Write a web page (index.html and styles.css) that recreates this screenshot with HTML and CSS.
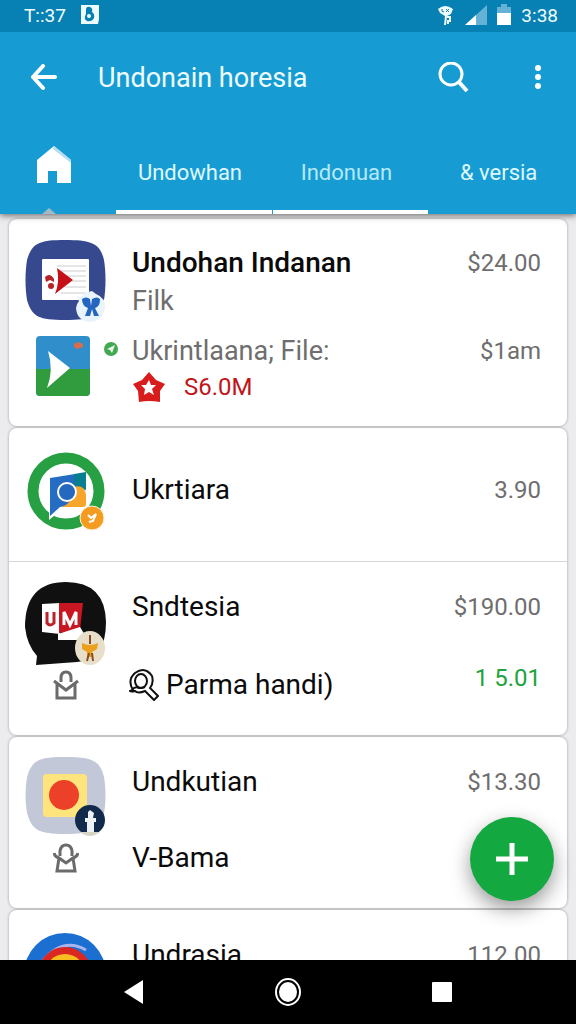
FILE: index.html
```html
<!DOCTYPE html>
<html lang="id">
<head>
    <meta charset="UTF-8">
    <meta name="viewport" content="width=device-width, initial-scale=1.0">
    <title>Undonain horesia</title>
    <link rel="stylesheet" href="styles.css">
</head>
<body>
    <header class="app-header">
        <div class="status-bar">
            <span>T::37</span>
            <svg width="20" height="22" viewBox="0 0 20 22">
                <path d="M1 1h18v14l-1 5H1z" fill="#effcff"/>
                <path d="M6 10V6q0-4 4-3 3 1 2 5 3 2 2 6-2 4-7 3-4-2-1-7z" fill="#0780b3"/>
                <circle cx="9" cy="12" r="2" fill="#effcff"/>
            </svg>
            <div class="status-right">
                <svg width="18" height="22" viewBox="0 0 18 22">
                    <path d="M1 5q7-6 15 0l-2 5-4 2-1 9H7l1-9-5-3z" fill="#effcff"/>
                    <path d="M5 5q-1 3 2 3m2-3l3 3m0-3L9 8" fill="none" stroke="#0780b3"/>
                    <path d="M10 13h3v4h-2v3" fill="none" stroke="#effcff" stroke-width="2"/>
                </svg>
                <svg width="22" height="22" viewBox="0 0 22 22">
                    <path d="M22 1v20H0z" fill="#66b2d6"/>
                    <path d="M11 11v10H0z" fill="#fff"/>
                </svg>
                <svg width="14" height="22" viewBox="0 0 14 22">
                    <path d="M0 3h4V0h6v3h4v6H0z" fill="#66b2d6"/>
                    <path d="M0 9h14v12H0z" fill="#fff"/>
                </svg>
                <span>3:38</span>
            </div>
        </div>
        <div class="toolbar">
            <button class="icon-btn" aria-label="Back">
                <svg width="28" height="28" viewBox="0 0 28 28" fill="none" stroke="#fff" stroke-width="4" stroke-linecap="round" stroke-linejoin="round">
                    <path d="M13 2L3 13l10 11M3 13h22"/>
                </svg>
            </button>
            <h1 class="title">Undonain horesia</h1>
            <button class="icon-btn" aria-label="Search">
                <svg width="32" height="32" viewBox="0 0 32 32" fill="none" stroke="#fff" stroke-width="3">
                    <circle cx="13" cy="12" r="11"/>
                    <path d="M20 19l9 10" stroke-width="4"/>
                </svg>
            </button>
            <button class="icon-btn menu-btn" aria-label="More options">
                <svg width="8" height="28" viewBox="0 0 8 28" fill="#fff">
                    <circle cx="4" cy="4" r="3"/>
                    <circle cx="4" cy="13" r="3"/>
                    <circle cx="4" cy="22" r="3"/>
                </svg>
            </button>
        </div>
        <nav class="tabs">
            <a href="#" class="tab tab-home" aria-label="Home">
                <svg width="34" height="38" viewBox="0 0 34 38">
                    <path d="M0 14L17 0l17 14v23H20V25h-9v12H0z" fill="#fff"/>
                    <path d="M17 0l17 14v3L16 3z" fill="#b5dcf2"/>
                </svg>
            </a>
            <a href="#" class="tab active">Undowhan</a>
            <a href="#" class="tab active faded">Indonuan</a>
            <a href="#" class="tab">&amp; versia</a>
        </nav>
    </header>

    <main class="content">
        <section class="card">
            <div class="row first-row">
                <svg class="app-icon" width="82" height="82" viewBox="0 0 82 82">
                    <path d="M40 0C66 0 75 3 79 20c2 12 2 28 0 40-4 17-13 20-39 20S7 77 2 60C0 48 0 32 2 20 7 3 14 0 40 0z" fill="#36498f"/>
                    <rect x="17" y="19" width="47" height="41" rx="1" fill="#fff"/>
                    <path d="M32 26h29M36 31h25M42 36h19M46 41h15M40 47h21M36 53h25" stroke="#ccc"/>
                    <path d="M32 28l16 12-18 14q5-12 2-26z" fill="#c5101a"/>
                    <path d="M20 37q5-5 9 2v3l-4-2-4 2z" fill="#b92028"/>
                    <circle cx="26" cy="46" r="3" fill="#b92028"/>
                    <path d="M52 56l4 1 4-4 7-2 4 3q10 4 9 14-3 14-15 14-13-1-14-14 1-5 3-7z" fill="#e9f3fc"/>
                    <path d="M57 59q4-3 8 0l1 7 1-7q5-3 8 0 0 8-5 9l4 8h-5l-2-7-2 7h-5l3-8q-6-2-6-9z" fill="#2465be"/>
                </svg>
                <div class="info">
                    <h2 class="name bold">Undohan Indanan</h2>
                    <p class="sub">Filk</p>
                </div>
                <span class="price">$24.00</span>
            </div>
            <div class="row file-row">
                <div class="file-icons">
                    <svg width="54" height="60" viewBox="0 0 54 60">
                        <rect width="54" height="60" rx="4" fill="#308fca"/>
                        <path d="M0 33h54v23q0 4-4 4H4q-4 0-4-4z" fill="#319c3e"/>
                        <path d="M12 15l22 17-23 20q7-18 1-37z" fill="#fff"/>
                        <path d="M38 8l4-2 5 2v3l-6 2-3-2z" fill="#d96c4b"/>
                    </svg>
                    <svg width="14" height="14" viewBox="0 0 14 14">
                        <circle cx="7" cy="7" r="7" fill="#43a852"/>
                        <path d="M11 3L8 11 6 8 3 7z" fill="#eaf6eb"/>
                    </svg>
                </div>
                <div class="info">
                    <p class="sub">Ukrintlaana; File:</p>
                    <p class="rating">
                        <svg width="34" height="32" viewBox="0 0 34 32">
                            <path d="M17 1l7 8 9 4-5 7v11q-11-2-21 0l-1-11-5-7 9-4z" fill="#d81c1c"/>
                            <path d="M17 9l2 5h5l-4 4 2 6-5-3-5 3 1-6-4-4h5z" fill="#fff"/>
                        </svg>
                        <span>S6.0M</span>
                    </p>
                </div>
                <span class="price">$1am</span>
            </div>
        </section>

        <section class="card">
            <div class="item short">
                <div class="row">
                    <svg class="app-icon" width="82" height="82" viewBox="0 0 82 82">
                        <circle cx="41" cy="40" r="33" fill="#fff" stroke="#27a043" stroke-width="11"/>
                        <path d="M24 63l2-10 10 6-12 10z" fill="#fff"/>
                        <path d="M25 27l25-4v31l-15 2-10 9z" fill="#246dc2"/>
                        <path d="M49 23l12-2v18l-12-3z" fill="#087f91"/>
                        <path d="M48 36q12-3 13 8v9q0 3-3 3H36q12-3 12-20z" fill="#f7a62b"/>
                        <circle cx="42" cy="41" r="9" fill="#2468bf" stroke="#fff" stroke-width="2"/>
                        <circle cx="67" cy="67" r="12" fill="#f49c20" stroke="#fff3dd"/>
                        <path d="M63 64l3 3 5-4-3 7-4 1" fill="none" stroke="#fff" stroke-width="2"/>
                    </svg>
                    <h2 class="name">Ukrtiara</h2>
                    <span class="price">3.90</span>
                </div>
            </div>
            <div class="item">
                <div class="row">
                    <svg class="app-icon" width="82" height="84" viewBox="0 0 82 84">
                        <path d="M41 0q39 0 40 40 0 38-29 40l-41 3 1-9Q2 63 0 45 0 0 41 0z" fill="#101010"/>
                        <path d="M17 22l18-1v31l-18-2z" fill="#fff"/>
                        <path d="M34 21h24l-3 27-21 3z" fill="#c81722"/>
                        <path d="M33 52l22-7 8 13H33z" fill="#fff"/>
                        <path d="M22 30v11q3 4 7 0V30" fill="none" stroke="#b9232a" stroke-width="3"/>
                        <path d="M39 43V30l6 13 6-13v13" fill="none" stroke="#fff" stroke-width="3"/>
                        <ellipse cx="65" cy="66" rx="15" ry="17" fill="#e8dfca"/>
                        <path d="M57 61q8 4 16 0l-1 6-5 3v5h-5v-5l-5-3z" fill="#eba11d"/>
                        <path d="M65 53v9M64 71l-2 8m5-8l1 8" stroke="#8a4c22" stroke-width="2"/>
                    </svg>
                    <h2 class="name">Sndtesia</h2>
                    <span class="price">$190.00</span>
                </div>
                <div class="row detail">
                    <svg class="bag" width="26" height="30" viewBox="0 0 26 30" fill="none" stroke="#6b6b6b" stroke-width="3">
                        <path d="M8 12V8q0-6 5-6t5 6v4"/>
                        <path d="M1 11l12 9 12-9M4 14v14h18V14"/>
                    </svg>
                    <p class="name search-name">
                        <svg width="30" height="32" viewBox="0 0 30 32" fill="none" stroke="#111" stroke-width="2">
                            <path d="M4 21q-6-10 2-17 10-7 17 3 2 7-2 12l8 8-4 4-9-9q-7 3-10 0-4 1-5 0z"/>
                            <ellipse cx="12" cy="12" rx="6" ry="7"/>
                            <path d="M3 21q3-4 7-2 4 0 6-1"/>
                        </svg>
                        <span>Parma handi)</span>
                    </p>
                    <span class="price green">1 5.01</span>
                </div>
            </div>
        </section>

        <section class="card">
            <div class="item">
                <div class="row">
                    <svg class="app-icon" width="82" height="82" viewBox="0 0 82 82">
                        <path d="M40 0C66 0 75 3 79 20c2 12 2 26 0 36-4 17-12 21-39 21S7 73 2 56C0 44 0 32 2 20 7 3 14 0 40 0z" fill="#c3c8d8"/>
                        <rect x="18" y="17" width="44" height="43" rx="4" fill="#fde47d"/>
                        <circle cx="39" cy="38" r="15" fill="#ec4128"/>
                        <circle cx="65" cy="63" r="15" fill="#11294b"/>
                        <path d="M55 75h20q-10 8-20 0z" fill="#d8d4c5"/>
                        <path d="M63 55l2-2 4 3-1 5h3v4h-2v10h-7V65h-2v-4h3z" fill="#eef2f7"/>
                    </svg>
                    <h2 class="name">Undkutian</h2>
                    <span class="price">$13.30</span>
                </div>
                <div class="row detail">
                    <svg class="bag" width="26" height="30" viewBox="0 0 26 30" fill="none" stroke="#6b6b6b" stroke-width="3">
                        <path d="M7 13V8q1-6 6-6t6 6v5"/>
                        <path d="M1 10q1 4 5 5l7 5 7-5q4-1 5-5M6 15L4 28h18l-2-13"/>
                    </svg>
                    <p class="name">V-Bama</p>
                </div>
            </div>
        </section>

        <section class="card">
            <div class="item">
                <div class="row">
                    <svg class="app-icon" width="82" height="82" viewBox="0 0 82 82">
                        <circle cx="40" cy="44" r="41" fill="#1b6fd0"/>
                        <path d="M16 33Q37 6 61 20" fill="none" stroke="#a9b4ee" stroke-width="3"/>
                        <circle cx="40" cy="44" r="27" fill="#da2721"/>
                        <circle cx="40" cy="44" r="20" fill="#f9bd22"/>
                        <circle cx="40" cy="44" r="12" fill="#f6f5d2"/>
                        <circle cx="40" cy="44" r="8" fill="#3c9b47"/>
                    </svg>
                    <h2 class="name">Undrasia</h2>
                    <span class="price">112.00</span>
                </div>
            </div>
        </section>

        <button class="fab" aria-label="Add">
            <svg width="32" height="32" viewBox="0 0 32 32" stroke="#fff" stroke-width="5">
                <path d="M16 0v32M0 16h32"/>
            </svg>
        </button>
    </main>

    <footer class="nav-bar">
        <button class="icon-btn" aria-label="Back">
            <svg width="20" height="26" viewBox="0 0 20 26"><path d="M19 1v24L0 13z" fill="#fff"/></svg>
        </button>
        <button class="icon-btn" aria-label="Home">
            <svg width="28" height="30" viewBox="0 0 28 30">
                <ellipse cx="14" cy="15" rx="12" ry="13" fill="none" stroke="#fff" stroke-width="2"/>
                <ellipse cx="14" cy="15" rx="9" ry="10" fill="#fff"/>
            </svg>
        </button>
        <button class="icon-btn" aria-label="Recent apps">
            <svg width="22" height="22" viewBox="0 0 22 22"><rect x="1" y="1" width="20" height="20" rx="1" fill="#fff"/></svg>
        </button>
    </footer>
</body>
</html>
```
FILE: styles.css
```css
* {
    box-sizing: border-box;
}

body {
    margin: 0;
    height: 100vh;
    display: flex;
    flex-direction: column;
    overflow: hidden;
    background: #ececee;
    font-family: Roboto, "Liberation Sans", sans-serif;
    color: #0a0a0a;
}

h1, h2, p {
    margin: 0;
    font-weight: 400;
}

svg {
    display: block;
    flex-shrink: 0;
}

.icon-btn {
    padding: 0;
    border: none;
    background: none;
    cursor: pointer;
}

/* header */
.app-header {
    background: #169cd3;
    color: #effcff;
    box-shadow: 0 2px 6px rgba(0, 0, 0, 0.5);
    z-index: 1;
}

.status-bar {
    display: flex;
    align-items: center;
    gap: 14px;
    height: 32px;
    padding: 0 18px 2px 24px;
    background: #0780b3;
    font-size: 19px;
}

.status-right {
    display: flex;
    align-items: center;
    gap: 10px;
    margin-left: auto;
}

.toolbar {
    display: flex;
    align-items: center;
    height: 92px;
    padding: 0 34px 0 30px;
}

.title {
    flex: 1;
    margin-left: 40px;
    font-size: 27px;
}

.menu-btn {
    margin-left: 64px;
}

.tabs {
    display: grid;
    grid-template-columns: 20% 27% 27% 1fr;
    column-gap: 1px;
    height: 90px;
}

.tab {
    display: flex;
    align-items: center;
    justify-content: center;
    padding: 10px 8px 0 0;
    border-bottom: 4px solid transparent;
    color: #dff8ff;
    font-size: 22px;
    text-decoration: none;
}

.tab.active {
    border-bottom-color: #fff;
}

.tab.faded {
    color: #b5e9fa;
}

.tab-home {
    position: relative;
    padding: 0 8px 4px 0;
}

.tab-home::after {
    content: "";
    position: absolute;
    left: 42px;
    bottom: -4px;
    border: 7px solid transparent;
    border-top: none;
    border-bottom: 6px solid #9fb9c7;
}

/* cards */
.content {
    position: relative;
    flex: 1;
    min-height: 0;
    overflow: hidden;
    display: flex;
    flex-direction: column;
    gap: 2px;
    padding: 5px 9px 0;
}

.card {
    flex-shrink: 0;
    background: #fff;
    border-radius: 8px;
    box-shadow: 0 0 3px rgba(0, 0, 0, 0.35);
}

.row {
    display: grid;
    grid-template-columns: 82px 1fr auto;
    column-gap: 25px;
    padding: 0 26px 0 16px;
}

.first-row {
    padding-top: 21px;
}

.first-row .info {
    padding-top: 4px;
}

.name,
.sub,
.price {
    font-size: 28px;
    line-height: 38px;
}

.name,
.price {
    margin-top: 6px;
}

.first-row .price {
    margin-top: 4px;
}

.info .name {
    margin-top: 0;
}

.bold {
    font-weight: 500;
}

.sub {
    color: #6e6e6e;
    font-size: 27px;
}

.price {
    color: #6e6e6e;
    font-size: 24px;
}

.file-row {
    padding-top: 10px;
    padding-bottom: 22px;
}

.file-row .price {
    margin-top: 0;
}

.file-icons {
    display: flex;
    gap: 14px;
    padding: 4px 0 0 11px;
}

.file-icons svg + svg {
    margin-top: 6px;
}

.rating {
    display: flex;
    align-items: center;
    gap: 18px;
    color: #c0161b;
    font-size: 24px;
    line-height: 34px;
}

.item {
    padding: 20px 0 31px;
}

.item + .item {
    border-top: 1px solid #d6d6d6;
}

.item.short {
    padding: 23px 0 28px;
}

.short .name,
.short .price {
    margin-top: 20px;
}

.detail {
    align-items: center;
}

.detail .name {
    margin-top: 0;
}

.bag {
    justify-self: center;
}

.search-name {
    display: flex;
    align-items: center;
    gap: 7px;
    margin-left: -3px;
}

.price.green {
    align-self: start;
    margin-top: 0;
    color: #20a340;
    line-height: 24px;
}

.fab {
    position: absolute;
    right: 22px;
    bottom: 59px;
    display: flex;
    align-items: center;
    justify-content: center;
    width: 84px;
    height: 84px;
    padding: 0;
    border: none;
    border-radius: 50%;
    background: #14a940;
    box-shadow: 0 8px 20px rgba(0, 0, 0, 0.4);
    cursor: pointer;
}

/* system navigation */
.nav-bar {
    display: flex;
    align-items: center;
    height: 64px;
    padding: 0 10%;
    background: #000;
}

.nav-bar .icon-btn {
    display: flex;
    flex: 1;
    justify-content: center;
}
```
